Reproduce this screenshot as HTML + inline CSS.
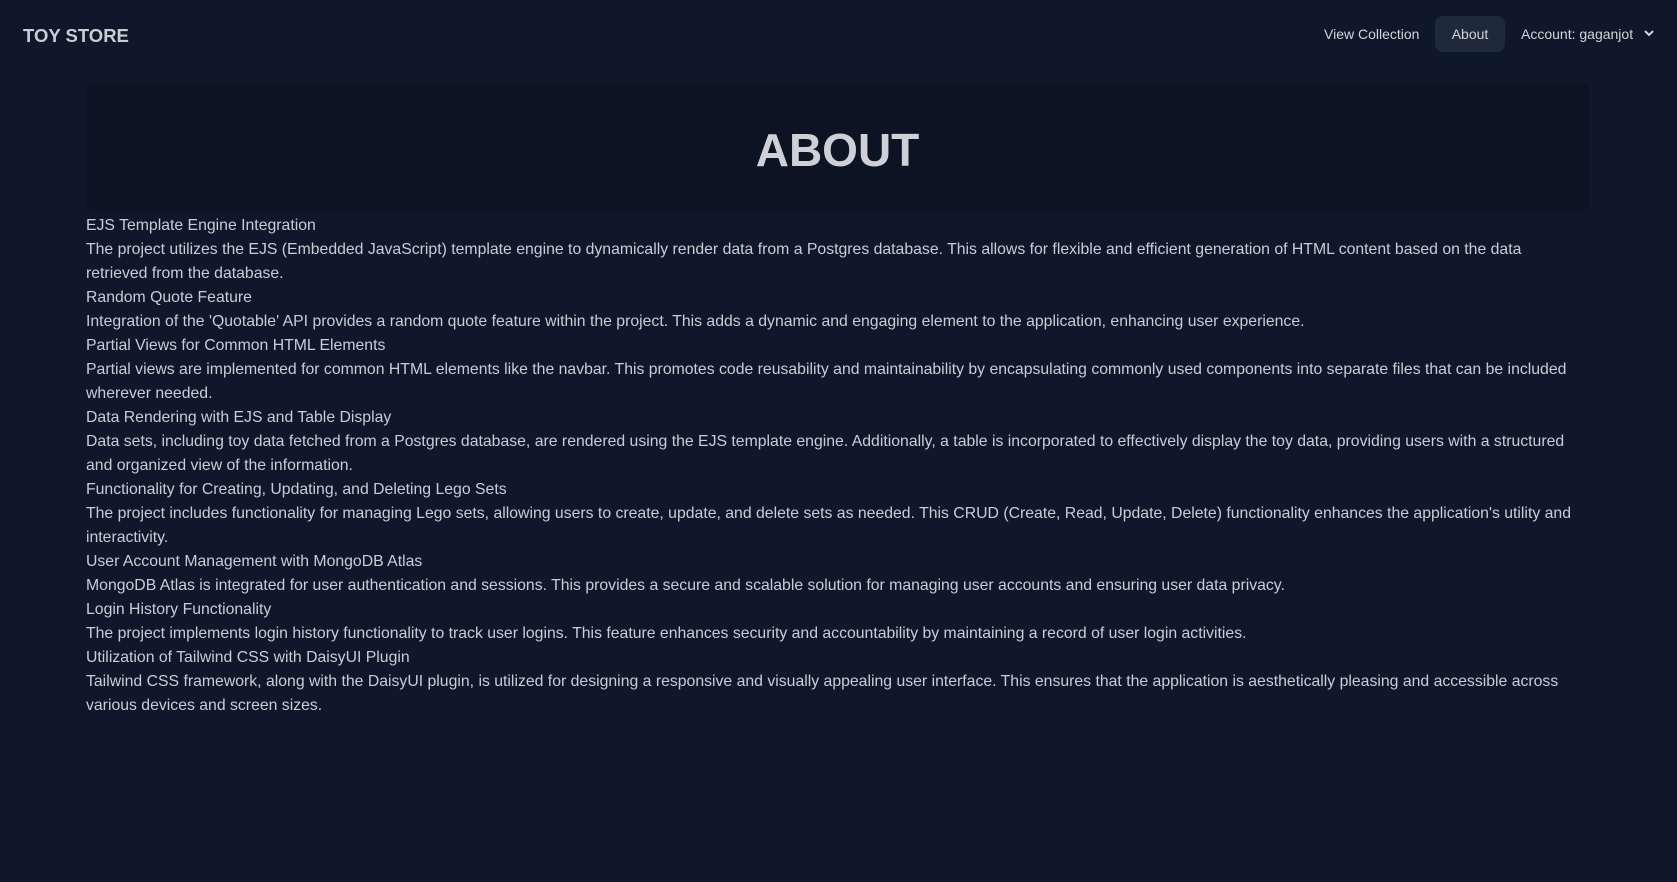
<!DOCTYPE html>
<html><head><meta charset="utf-8"><style>
*{margin:0;padding:0;box-sizing:border-box}
body{width:1677px;height:882px;background:#0f172a;color:#c9cdd4;font-family:"Liberation Sans",sans-serif;overflow:hidden;position:relative}
.logo{position:absolute;left:23px;top:25px;font-size:18.5px;font-weight:bold;color:#c9cdd4}
.nav{position:absolute;top:16px;right:0;height:36px;font-size:14px;color:#d0d4da}
.nav span{position:absolute;top:0;line-height:36px;white-space:nowrap}
.about{background:#1e293b;border-radius:8px;width:70px;text-align:center}
.hero{position:absolute;left:86px;top:84px;width:1503px;height:127px;background:#0c1323;border-radius:8px;text-align:center}
.hero h1{font-size:46px;font-weight:bold;line-height:133px;color:#cdd1d7}
.txt{position:absolute;left:86px;top:214px;font-size:15.8px;line-height:24px}
.txt div{white-space:nowrap}
</style></head><body>
<div class="logo">TOY STORE</div>
<div class="nav">
<span style="left:-353px">View Collection</span>
<span class="about" style="left:-242px">About</span>
<span style="left:-156px">Account: gaganjot</span>
<svg style="position:absolute;left:-34px;top:13px" width="12" height="10" viewBox="0 0 12 10"><path d="M2 2l4 4 4-4" stroke="#d0d4da" stroke-width="2" fill="none"/></svg>
</div>
<div class="hero"><h1>ABOUT</h1></div>
<div class="txt">
<div>EJS Template Engine Integration</div>
<div>The project utilizes the EJS (Embedded JavaScript) template engine to dynamically render data from a Postgres database. This allows for flexible and efficient generation of HTML content based on the data</div>
<div>retrieved from the database.</div>
<div>Random Quote Feature</div>
<div>Integration of the 'Quotable' API provides a random quote feature within the project. This adds a dynamic and engaging element to the application, enhancing user experience.</div>
<div>Partial Views for Common HTML Elements</div>
<div>Partial views are implemented for common HTML elements like the navbar. This promotes code reusability and maintainability by encapsulating commonly used components into separate files that can be included</div>
<div>wherever needed.</div>
<div>Data Rendering with EJS and Table Display</div>
<div>Data sets, including toy data fetched from a Postgres database, are rendered using the EJS template engine. Additionally, a table is incorporated to effectively display the toy data, providing users with a structured</div>
<div>and organized view of the information.</div>
<div>Functionality for Creating, Updating, and Deleting Lego Sets</div>
<div>The project includes functionality for managing Lego sets, allowing users to create, update, and delete sets as needed. This CRUD (Create, Read, Update, Delete) functionality enhances the application's utility and</div>
<div>interactivity.</div>
<div>User Account Management with MongoDB Atlas</div>
<div>MongoDB Atlas is integrated for user authentication and sessions. This provides a secure and scalable solution for managing user accounts and ensuring user data privacy.</div>
<div>Login History Functionality</div>
<div>The project implements login history functionality to track user logins. This feature enhances security and accountability by maintaining a record of user login activities.</div>
<div>Utilization of Tailwind CSS with DaisyUI Plugin</div>
<div>Tailwind CSS framework, along with the DaisyUI plugin, is utilized for designing a responsive and visually appealing user interface. This ensures that the application is aesthetically pleasing and accessible across</div>
<div>various devices and screen sizes.</div>
</div>
</body></html>
